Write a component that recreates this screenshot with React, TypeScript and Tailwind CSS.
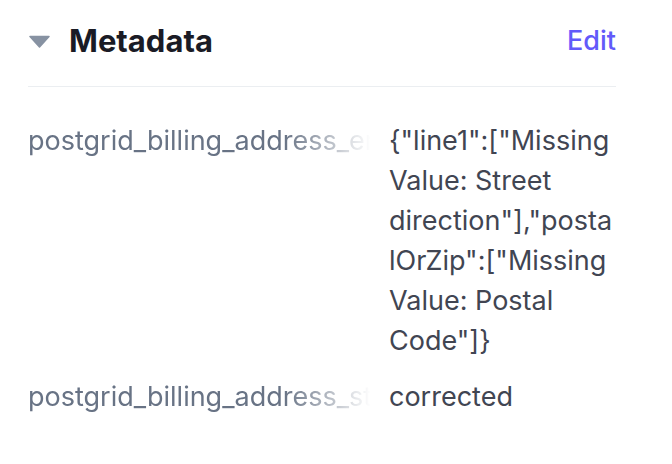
const rows = [
  {
    key: "postgrid_billing_address_errors",
    value: '{"line1":["Missing Value: Street direction"],"postalOrZip":["Missing Value: Postal Code"]}',
  },
  { key: "postgrid_billing_address_status", value: "corrected" },
];

export default function App() {
  return (
    <div className="min-h-screen bg-white font-['Inter',sans-serif]">
      <section className="w-[588px] ml-[28px] pt-[21px]">
        <div className="flex h-[40px] items-center justify-between">
          <div className="flex items-center">
            <svg width="21" height="13" viewBox="0 0 21 13" className="ml-[1px] mt-[1px]">
              <path d="M1 1.5 H20 L10.5 12 Z" fill="#8792a2" stroke="#8792a2" strokeWidth="1.5" strokeLinejoin="round" />
            </svg>
            <h3 className="ml-[19px] text-[31px] font-bold leading-[40px] text-[#1a1b25]">Metadata</h3>
          </div>
          <button className="text-[27px] font-medium leading-[40px] text-[#625afa]">Edit</button>
        </div>

        <div className="mt-[25px] border-b border-[#ebeef1]" />

        <dl className="mt-[34px] flex flex-col gap-4">
          {rows.map((row) => (
            <div key={row.key} className="grid grid-cols-[346px_minmax(0,1fr)] gap-[15px] text-[27px] leading-[40px]">
              <dt className="min-w-0 overflow-hidden whitespace-nowrap text-[#687385] [mask-image:linear-gradient(to_right,black_74%,transparent_99%)]">
                {row.key}
              </dt>
              <dd className="min-w-0 break-words text-[#414552]">{row.value}</dd>
            </div>
          ))}
        </dl>
      </section>
    </div>
  );
}
